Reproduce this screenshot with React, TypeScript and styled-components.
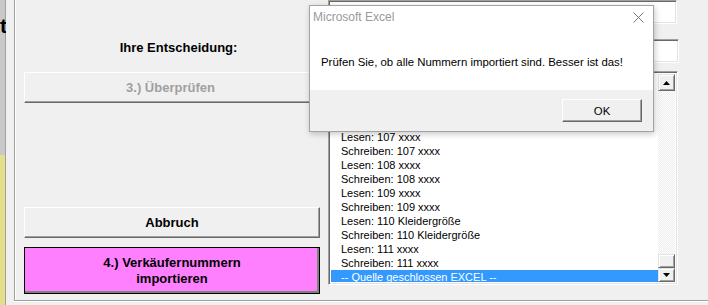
import styled, { createGlobalStyle } from "styled-components";

const GlobalStyle = createGlobalStyle`
  html, body {
    margin: 0;
    padding: 0;
    background: #f0f0f0;
  }
  body {
    font-family: "Liberation Sans", Arial, sans-serif;
  }
`;

const listItems = [
  "Lesen: 105 xxxx",
  "Schreiben: 105 xxxx",
  "Lesen: 106 xxxx",
  "Schreiben: 106 xxxx",
  "Lesen: 107 xxxx",
  "Schreiben: 107 xxxx",
  "Lesen: 108 xxxx",
  "Schreiben: 108 xxxx",
  "Lesen: 109 xxxx",
  "Schreiben: 109 xxxx",
  "Lesen: 110 Kleidergröße",
  "Schreiben: 110 Kleidergröße",
  "Lesen: 111 xxxx",
  "Schreiben: 111 xxxx",
  "-- Quelle geschlossen EXCEL --",
];

function Arrow({ up }: { up?: boolean }) {
  return (
    <svg width="7" height="4" viewBox="0 0 7 4">
      <polygon points={up ? "3.5,0 7,4 0,4" : "0,0 7,0 3.5,4"} fill="#000" />
    </svg>
  );
}

function App() {
  return (
    <Page>
      <GlobalStyle />
      <SideStrip>
        <SideTitle>Verkäuferimport</SideTitle>
      </SideStrip>

      <Frame>
        <LeftColumn>
          <Caption>Ihre Entscheidung:</Caption>
          <CmdButton $w={293} $h={31} disabled>
            3.) Überprüfen
          </CmdButton>
          <Spacer />
          <CmdButton $w={296} $h={31}>
            Abbruch
          </CmdButton>
          <CmdButton $w={296} $h={47} $pink>
            4.) Verkäufernummern
            <br />
            importieren
          </CmdButton>
        </LeftColumn>

        <RightColumn>
          <TextField $w={349} />
          <TextField $w={351} />
          <ListBox>
            <ListRows>
              {listItems.map((item, i) => (
                <ListRow key={i} $selected={i === listItems.length - 1}>
                  {item}
                </ListRow>
              ))}
            </ListRows>
            <ScrollBar>
              <ScrollButton $h={17}>
                <Arrow up />
              </ScrollButton>
              <ScrollTrack />
              <ScrollButton $h={14} />
              <ScrollButton $h={14}>
                <Arrow />
              </ScrollButton>
            </ScrollBar>
          </ListBox>
        </RightColumn>
      </Frame>

      <MsgBox>
        <TitleBar>
          <Title>Microsoft Excel</Title>
          <svg width="11" height="11" viewBox="0 0 11 11">
            <path d="M0.5 0.5 L10.5 10.5 M10.5 0.5 L0.5 10.5" stroke="#777" strokeWidth="1" />
          </svg>
        </TitleBar>
        <MsgBody>Prüfen Sie, ob alle Nummern importiert sind. Besser ist das!</MsgBody>
        <MsgFooter>
          <OkButton>OK</OkButton>
        </MsgFooter>
      </MsgBox>
    </Page>
  );
}

const Page = styled.div`
  position: relative;
  display: flex;
  width: 708px;
  height: 305px;
  overflow: hidden;
  background: #f0f0f0;
`;

const SideStrip = styled.div`
  flex: none;
  width: 6px;
  height: 305px;
  margin-right: 8px;
  overflow: hidden;
  display: flex;
  justify-content: flex-end;
  align-items: flex-start;
  background: linear-gradient(to right, transparent 5px, #a0a0a0 5px),
    linear-gradient(#c8c8c8 155px, #e3df8b 155px);
`;

const SideTitle = styled.div`
  flex: none;
  padding-top: 14px;
  margin-right: -1px;
  font: bold 21px/24px "Liberation Sans", Arial, sans-serif;
  color: #000;
  white-space: nowrap;
`;

const Frame = styled.div`
  flex: 1;
  box-sizing: border-box;
  height: 301px;
  display: flex;
  padding-left: 9px;
  border-left: 1px solid #a0a0a0;
  border-bottom: 1px solid #a0a0a0;
  box-shadow: inset 1px 0 0 #fff, 0 1px 0 #fff;
`;

const LeftColumn = styled.div`
  flex: none;
  width: 304px;
  display: flex;
  flex-direction: column;
  align-items: flex-start;
  padding: 40px 0 6px;
  box-sizing: border-box;
`;

const Caption = styled.div`
  width: 304px;
  box-sizing: border-box;
  padding-left: 5px;
  margin-bottom: 17px;
  text-align: center;
  font: bold 13px/15px "Liberation Sans", Arial, sans-serif;
  color: #000;
`;

const Spacer = styled.div`
  flex: 1;
`;

const CmdButton = styled.button<{ $w: number; $h: number; $pink?: boolean }>`
  flex: none;
  box-sizing: border-box;
  width: ${(p) => p.$w}px;
  height: ${(p) => p.$h}px;
  margin: 0 0 ${(p) => (p.$pink ? 0 : 9)}px;
  padding: 0;
  font: bold 13px/16px "Liberation Sans", Arial, sans-serif;
  color: ${(p) => (p.disabled ? "#a0a0a0" : "#000")};
  background: ${(p) => (p.$pink ? "#ff80ff" : "#f0f0f0")};
  border: 1px solid;
  border-color: ${(p) => (p.$pink ? "#000" : "#fff #696969 #696969 #fff")};
  box-shadow: ${(p) =>
    p.$pink ? "inset -2px -2px 0 #808080" : "inset -1px -1px 0 #a0a0a0"};
  text-align: center;
  cursor: default;
`;

const RightColumn = styled.div`
  flex: none;
  display: flex;
  flex-direction: column;
  align-items: flex-start;
`;

const sunken = `
  box-sizing: border-box;
  border: 1px solid;
  border-color: #a0a0a0 #fff #fff #a0a0a0;
  box-shadow: inset 1px 1px 0 #696969, inset -1px -1px 0 #e3e3e3;
`;

const TextField = styled.div<{ $w: number }>`
  ${sunken}
  width: ${(p) => p.$w}px;
  height: 24px;
  margin-bottom: 15px;
  background: #fff;
  &:nth-child(2) {
    margin-bottom: 8px;
  }
`;

const ListBox = styled.div`
  ${sunken}
  width: 350px;
  height: 214px;
  padding: 2px;
  display: flex;
  background: #fff;
`;

const ListRows = styled.div`
  flex: 1;
  overflow: hidden;
`;

const ListRow = styled.div<{ $selected?: boolean }>`
  height: 14px;
  padding-left: 10px;
  font: 11px/14px "Liberation Sans", Arial, sans-serif;
  white-space: nowrap;
  color: ${(p) => (p.$selected ? "#fff" : "#000")};
  background: ${(p) => (p.$selected ? "#3399ff" : "transparent")};
`;

const ScrollBar = styled.div`
  flex: none;
  width: 17px;
  display: flex;
  flex-direction: column;
`;

const ScrollButton = styled.div<{ $h: number }>`
  flex: none;
  box-sizing: border-box;
  height: ${(p) => p.$h}px;
  display: flex;
  align-items: center;
  justify-content: center;
  background: #f0f0f0;
  border: 1px solid;
  border-color: #e3e3e3 #696969 #696969 #e3e3e3;
  box-shadow: inset 1px 1px 0 #fff, inset -1px -1px 0 #a0a0a0;
`;

const ScrollTrack = styled.div`
  flex: 1;
  background: repeating-conic-gradient(#ffffff 0 25%, #ececec 0 50%) 0 0 / 2px 2px;
`;

const MsgBox = styled.div`
  position: absolute;
  left: 309px;
  top: 5px;
  width: 345px;
  height: 127px;
  box-sizing: border-box;
  display: flex;
  flex-direction: column;
  background: #fff;
  border: 1px solid #a3a3a3;
  box-shadow: 1px 2px 6px rgba(0, 0, 0, 0.22);
`;

const TitleBar = styled.div`
  flex: none;
  height: 30px;
  display: flex;
  justify-content: space-between;
  align-items: flex-start;
  padding: 4px 9px 0 3px;
  box-sizing: border-box;
  svg {
    margin-top: 2px;
  }
`;

const Title = styled.div`
  font: 12px/15px "Liberation Sans", Arial, sans-serif;
  color: #9a98a0;
`;

const MsgBody = styled.div`
  flex: none;
  height: 54px;
  box-sizing: border-box;
  padding: 19px 0 0 11px;
  font: 11.4px/14px "Liberation Sans", Arial, sans-serif;
  color: #000;
  white-space: nowrap;
`;

const MsgFooter = styled.div`
  flex: 1;
  display: flex;
  justify-content: flex-end;
  align-items: flex-start;
  padding: 9px 11px 0 0;
  background: #f0f0f0;
`;

const OkButton = styled.button`
  box-sizing: border-box;
  width: 80px;
  height: 23px;
  padding: 0;
  font: 11.4px/14px "Liberation Sans", Arial, sans-serif;
  color: #000;
  background: #f0f0f0;
  border: 1px solid;
  border-color: #fff #696969 #696969 #fff;
  box-shadow: inset -1px -1px 0 #a0a0a0;
  cursor: default;
`;

export default App;
